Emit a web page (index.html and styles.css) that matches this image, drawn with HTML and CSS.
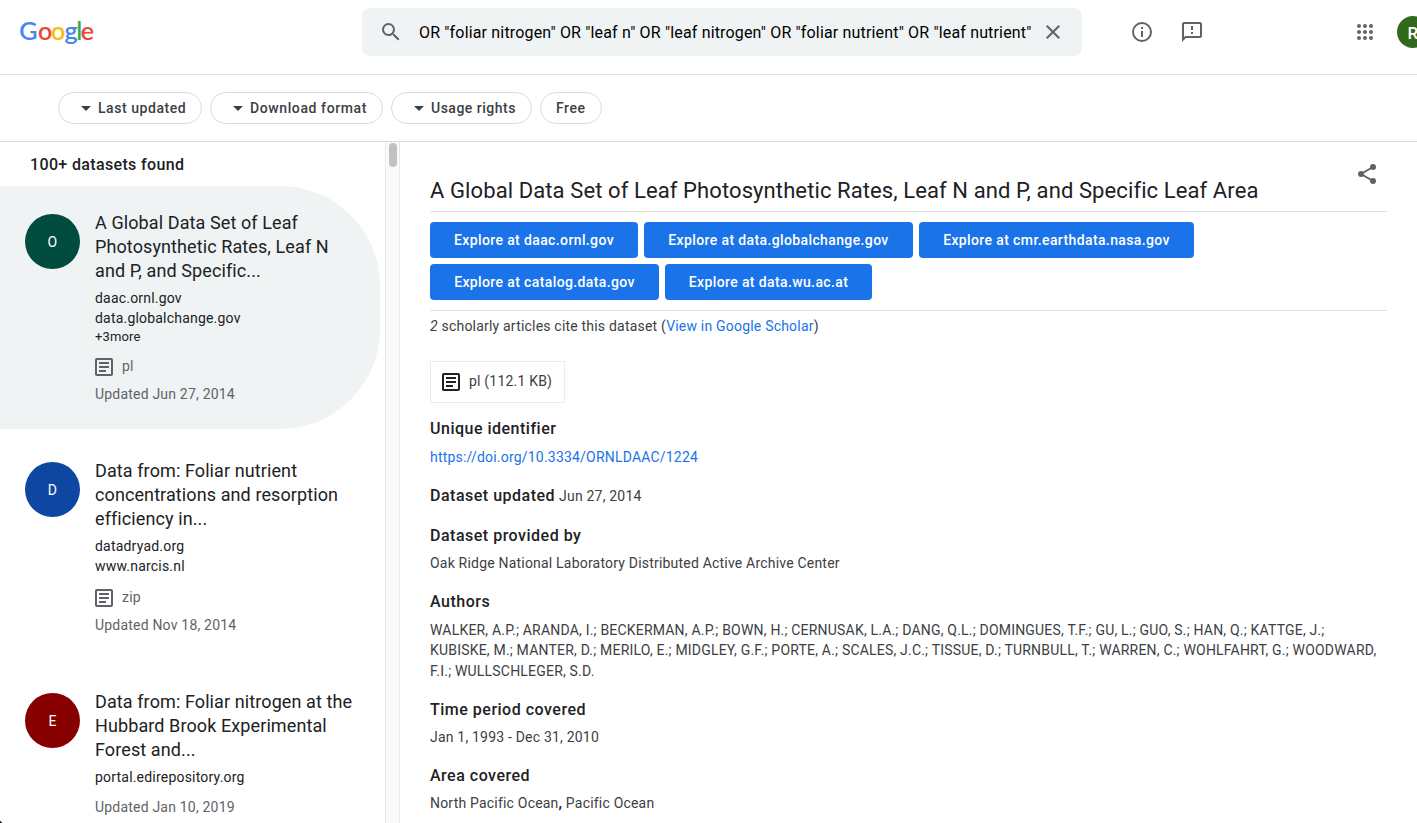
FILE: index.html
```html
<!DOCTYPE html>
<html lang="en">
<head>
<meta charset="utf-8">
<title>Dataset Search</title>
<link rel="stylesheet" href="styles.css">
</head>
<body>
<svg width="0" height="0" class="defs">
  <symbol id="article" viewBox="0 0 18 18"><rect x="1" y="1" width="16" height="16" rx="0.8" fill="none" stroke="currentColor" stroke-width="2"/><path d="M4 4h10v2H4zM4 8h10v2H4zM4 12h7v2H4z" fill="currentColor"/></symbol>
  <symbol id="caret" viewBox="0 0 10 5"><path d="M0 0h10L5 5z" fill="currentColor"/></symbol>
</svg>
<header class="header">
  <svg class="logo" width="76" height="32" viewBox="0 0 76 32"><text y="24.200" class="logo-text"><tspan x="-0.7" fill="#4285f4" stroke="#4285f4">G</tspan><tspan x="18.1" fill="#ea4335" stroke="#ea4335">o</tspan><tspan x="31.1" fill="#fbbc05" stroke="#fbbc05">o</tspan><tspan x="44.6" fill="#4285f4" stroke="#4285f4">g</tspan><tspan x="56.2" fill="#34a853" stroke="#34a853">l</tspan><tspan x="60.800" fill="#ea4335" stroke="#ea4335">e</tspan></text></svg>
  <div class="search">
    <svg class="search-icon" width="24" height="24" viewBox="0 0 24 24"><path fill="currentColor" d="M15.5 14h-.79l-.28-.27A6.47 6.47 0 0 0 16 9.5 6.5 6.5 0 1 0 9.5 16c1.61 0 3.09-.59 4.23-1.57l.27.28v.79l5 4.99L20.49 19l-4.99-5zm-6 0a4.5 4.5 0 1 1 0-9 4.5 4.5 0 0 1 0 9z"/></svg>
    <div class="query">OR "foliar nitrogen" OR "leaf n" OR "leaf nitrogen" OR "foliar nutrient" OR "leaf nutrient"</div>
    <svg class="clear-icon" width="24" height="24" viewBox="0 0 24 24"><path fill="currentColor" d="M19 6.41 17.59 5 12 10.59 6.41 5 5 6.41 10.59 12 5 17.59 6.41 19 12 13.41 17.59 19 19 17.59 13.41 12z"/></svg>
  </div>
  <svg class="info-icon" width="24" height="24" viewBox="0 0 24 24"><path fill="currentColor" d="M11 7h2v2h-2zm0 4h2v6h-2zm1-9a10 10 0 1 0 0 20 10 10 0 0 0 0-20zm0 18a8 8 0 1 1 0-16 8 8 0 0 1 0 16z"/></svg>
  <svg class="feedback-icon" width="24" height="24" viewBox="0 0 24 24"><path fill="currentColor" d="M20 2H4c-1.100 0-1.990.9-1.990 2L2 22l4-4h14c1.100 0 2-.9 2-2V4c0-1.100-.9-2-2-2zm0 14H5.170L4 17.170V4h16v12zM11 12h2v2h-2zm0-6h2v4h-2z"/></svg>
  <svg class="apps-icon" width="24" height="24" viewBox="0 0 24 24" fill="currentColor"><circle cx="6" cy="6" r="2"/><circle cx="12" cy="6" r="2"/><circle cx="18" cy="6" r="2"/><circle cx="6" cy="12" r="2"/><circle cx="12" cy="12" r="2"/><circle cx="18" cy="12" r="2"/><circle cx="6" cy="18" r="2"/><circle cx="12" cy="18" r="2"/><circle cx="18" cy="18" r="2"/></svg>
  <div class="account">R</div>
</header>
<nav class="filters">
  <div class="chip chip-updated"><svg width="10" height="5"><use href="#caret"/></svg><span>Last updated</span></div>
  <div class="chip chip-format"><svg width="10" height="5"><use href="#caret"/></svg><span>Download format</span></div>
  <div class="chip chip-rights"><svg width="10" height="5"><use href="#caret"/></svg><span>Usage rights</span></div>
  <div class="chip chip-free"><span>Free</span></div>
</nav>
<main class="main">
  <section class="results">
    <h2 class="count">100+ datasets found</h2>
    <article class="card selected">
      <div class="avatar green">O</div>
      <div class="info">
        <h3 class="name">A Global Data Set of Leaf<br>Photosynthetic Rates, Leaf N<br>and P, and Specific...</h3>
        <div class="site">daac.ornl.gov</div>
        <div class="site">data.globalchange.gov</div>
        <div class="more">+3more</div>
        <div class="format"><svg width="18" height="18"><use href="#article"/></svg><span>pl</span></div>
        <div class="date">Updated Jun 27, 2014</div>
      </div>
    </article>
    <article class="card">
      <div class="avatar blue">D</div>
      <div class="info">
        <h3 class="name">Data from: Foliar nutrient<br>concentrations and resorption<br>efficiency in...</h3>
        <div class="site">datadryad.org</div>
        <div class="site">www.narcis.nl</div>
        <div class="format"><svg width="18" height="18"><use href="#article"/></svg><span>zip</span></div>
        <div class="date">Updated Nov 18, 2014</div>
      </div>
    </article>
    <article class="card">
      <div class="avatar red">E</div>
      <div class="info">
        <h3 class="name">Data from: Foliar nitrogen at the<br>Hubbard Brook Experimental<br>Forest and...</h3>
        <div class="site">portal.edirepository.org</div>
        <div class="date late">Updated Jan 10, 2019</div>
      </div>
    </article>
  </section>
  <div class="scrollbar"><div class="thumb"></div></div>
  <section class="detail">
    <div class="title-row">
      <h1 class="title">A Global Data Set of Leaf Photosynthetic Rates, Leaf N and P, and Specific Leaf Area</h1>
      <svg class="share-icon" width="24" height="24" viewBox="0 0 24 24"><path fill="none" stroke="currentColor" stroke-width="1.900" d="M18 5 6 12l12 7"/><g fill="currentColor"><circle cx="18" cy="5" r="3"/><circle cx="6" cy="12" r="3"/><circle cx="18" cy="19" r="3"/></g></svg>
    </div>
    <div class="links">
      <a class="button w-daac">Explore at daac.ornl.gov</a>
      <a class="button w-change">Explore at data.globalchange.gov</a>
      <a class="button w-nasa">Explore at cmr.earthdata.nasa.gov</a>
      <a class="button w-catalog">Explore at catalog.data.gov</a>
      <a class="button w-wu">Explore at data.wu.ac.at</a>
    </div>
    <p class="cite"><em>2</em> scholarly articles cite this dataset (<a class="link">View in Google Scholar</a>)</p>
    <div class="file"><svg width="18" height="18"><use href="#article"/></svg><span>pl (112.1 KB)</span></div>
    <h2 class="label">Unique identifier</h2>
    <p class="value doi"><a class="link">https://doi.org/10.3334/ORNLDAAC/1224</a></p>
    <div class="inline-field"><h2 class="label">Dataset updated</h2><span class="inline-value">Jun 27, 2014</span></div>
    <h2 class="label">Dataset provided by</h2>
    <p class="value provider">Oak Ridge National Laboratory Distributed Active Archive Center</p>
    <h2 class="label">Authors</h2>
    <p class="value authors">WALKER, A.P.; ARANDA, I.; BECKERMAN, A.P.; BOWN, H.; CERNUSAK, L.A.; DANG, Q.L.; DOMINGUES, T.F.; GU, L.; GUO, S.; HAN, Q.; KATTGE, J.;<br>KUBISKE, M.; MANTER, D.; MERILO, E.; MIDGLEY, G.F.; PORTE, A.; SCALES, J.C.; TISSUE, D.; TURNBULL, T.; WARREN, C.; WOHLFAHRT, G.; WOODWARD,<br>F.I.; WULLSCHLEGER, S.D.</p>
    <h2 class="label period">Time period covered</h2>
    <p class="value">Jan 1, 1993 - Dec 31, 2010</p>
    <h2 class="label">Area covered</h2>
    <p class="value area">North Pacific Ocean<b>,</b> Pacific Ocean</p>
  </section>
</main>
<div class="window-corner"></div>
</body>
</html>
```
FILE: styles.css
```css
* { box-sizing: border-box; }
html, body { margin: 0; height: 823px; overflow: hidden; }
body { background: #fff; color: #202124; font: 14px/20px Roboto, sans-serif; letter-spacing: 0.2px; }
h1, h2, h3, p { margin: 0; font-weight: 400; }
svg { display: block; flex: none; }
.defs { position: absolute; }

.header { display: flex; align-items: flex-start; height: 75px; border-bottom: 1px solid #dfe1e2; color: #5f6368; padding: 8px 0 0 20px; overflow: hidden; }
.logo { margin-top: 8px; overflow: visible; }
.logo-text { font: 500 25px Lato, sans-serif; letter-spacing: 0; stroke-width: 0.2px; }
.search { display: flex; align-items: center; width: 720px; height: 48px; margin-left: 266px; padding: 0 17px; border-radius: 8px; background: #eff3f4; flex: none; }
.query { width: 613px; margin-left: 16px; padding-top: 1px; font-size: 16px; line-height: 24px; letter-spacing: 0.165px; color: #000; white-space: nowrap; }
.clear-icon { margin-left: 9px; }
.info-icon { margin: 12px 0 0 48px; }
.feedback-icon { margin: 12px 0 0 26px; }
.apps-icon { margin: 12px 0 0 149px; }
.account { flex: none; width: 32px; height: 32px; margin: 8px 0 0 20px; border-radius: 50%; background: #33691e; color: #fff; font: 500 17px/34px Roboto, sans-serif; text-align: center; }

.filters { display: flex; gap: 8px; height: 67px; padding: 17px 58px; border-bottom: 1px solid #d9dbdd; }
.chip { display: flex; align-items: center; gap: 7px; height: 32px; border: 1px solid #dadce0; border-radius: 16px; padding-left: 22px; color: #3c4043; font-weight: 500; letter-spacing: 0.55px; white-space: nowrap; }
.chip-updated { width: 144px; }
.chip-format { width: 173px; letter-spacing: 0.6px; }
.chip-rights { width: 141px; letter-spacing: 0.5px; }
.chip-free { width: 62px; padding-left: 15px; }

.main { display: flex; height: 681px; }
.results { width: 385px; flex: none; overflow: hidden; }
.count { height: 44px; padding-left: 30px; font-size: 16px; font-weight: 500; line-height: 45px; letter-spacing: 0.35px; }
.card { display: flex; width: 380px; padding: 25px 0 25px 25px; margin-bottom: 5px; border-radius: 0 100px 100px 0; }
.selected { background: #eff3f4; }
.avatar { flex: none; width: 55px; height: 55px; margin: 3px 15px 0 0; border-radius: 50%; color: #fff; line-height: 56px; text-align: center; }
.green { background: #004d40; }
.blue { background: #0d47a1; }
.red { background: #870000; }
.name { margin-bottom: 5px; font-size: 18px; line-height: 24px; letter-spacing: 0.1px; white-space: nowrap; }
.site { height: 20px; }
.more { height: 17px; font-size: 13px; line-height: 17px; letter-spacing: 0.15px; }
.format { display: flex; align-items: center; gap: 9px; height: 18px; margin-top: 13px; color: #5f6368; }
.format span, .file span { padding-bottom: 2px; }
.date { height: 20px; margin-top: 8px; color: #5f6368; }
.date.late { margin-top: 10px; }

.scrollbar { flex: none; width: 15px; padding: 1px 2px 0 3px; border: solid #e8e8e8; border-width: 0 1px; background: #fafafa; }
.thumb { width: 8px; height: 24px; border-radius: 4px; background: #c1c1c1; }

.detail { flex: none; width: 987px; padding-left: 30px; color: #3c4043; }
.title-row { display: flex; height: 70px; border-bottom: 1px solid #e0e0e0; }
.title { width: 925px; padding-top: 34px; font-size: 22px; line-height: 30px; letter-spacing: 0.1px; color: #202124; white-space: nowrap; }
.share-icon { margin-top: 20px; color: #5f6368; }
.links { display: flex; flex-wrap: wrap; gap: 6px; padding: 10px 100px 10px 0; border-bottom: 1px solid #e0e0e0; }
.button { height: 36px; border-radius: 4px; background: #1a73e8; color: #fff; font-weight: 500; line-height: 36px; letter-spacing: 0.38px; text-align: center; white-space: nowrap; }
.w-daac { width: 208px; }
.w-change { width: 269px; }
.w-nasa { width: 275px; }
.w-catalog { width: 229px; }
.w-wu { width: 207px; }
.cite { margin-top: 5px; }
.link { color: #1a73e8; }
.file { display: flex; align-items: center; gap: 9px; width: 135px; height: 42px; margin: 25px 0 16px; padding-left: 11px; border: 1px solid #ebebeb; }
.file svg { color: #202124; }
.label { margin-bottom: 7.6px; font-size: 16px; font-weight: 500; line-height: 20px; letter-spacing: 0.5px; color: #202124; }
.value { margin-bottom: 18.2px; line-height: 20.4px; white-space: nowrap; }
.doi { margin-bottom: 19px; }
.provider { margin-top: -0.6px; margin-bottom: 18.8px; }
.authors { margin-bottom: 19.2px; }
.period { margin-bottom: 7px; }
.inline-field { display: flex; align-items: baseline; gap: 4px; height: 40px; }
.area b { color: #202124; }
.window-corner { position: absolute; left: 0; bottom: 0; width: 3px; height: 3px; background: radial-gradient(circle at 100% 0, transparent 2.500px, #101828 3px); }
```
